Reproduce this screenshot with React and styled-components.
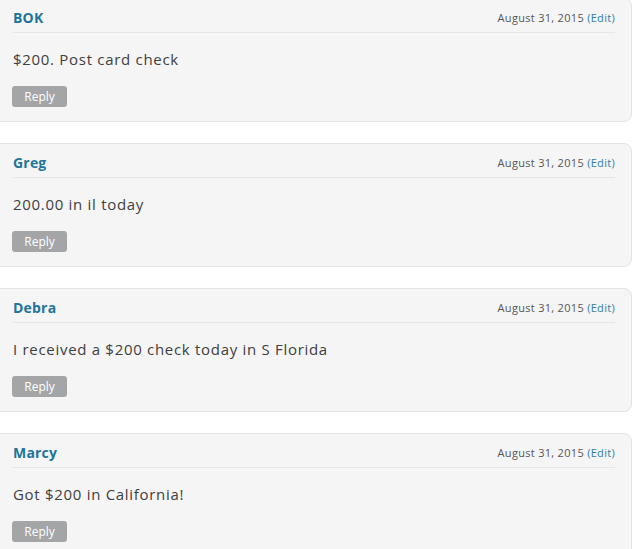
import React from "react";
import styled, { createGlobalStyle } from "styled-components";

const comments = [
  { id: 1, author: "BOK", date: "August 31, 2015", text: "$200. Post card check" },
  { id: 2, author: "Greg", date: "August 31, 2015", text: "200.00 in il today" },
  { id: 3, author: "Debra", date: "August 31, 2015", text: "I received a $200 check today in S Florida" },
  { id: 4, author: "Marcy", date: "August 31, 2015", text: "Got $200 in California!" },
];

export default function App() {
  return (
    <>
      <GlobalStyle />
      <CommentList>
        {comments.map((c) => (
          <Card key={c.id}>
            <Header>
              <Author>{c.author}</Author>
              <Meta>
                {c.date} <EditLink href="#">(Edit)</EditLink>
              </Meta>
            </Header>
            <Body>{c.text}</Body>
            <ReplyButton>Reply</ReplyButton>
          </Card>
        ))}
      </CommentList>
    </>
  );
}

const GlobalStyle = createGlobalStyle`
  body {
    margin: 0;
    background: #ffffff;
    font-family: "Open Sans", "Lato", sans-serif;
    overflow: hidden;
  }
`;

const CommentList = styled.div`
  display: flex;
  flex-direction: column;
  gap: 21px;
  margin: -2px 3px 0 -10px;
`;

const Card = styled.div`
  background: #f5f5f5;
  border: 1px solid #e3e3e3;
  border-radius: 8px;
  padding: 0 16px 14px 22px;
`;

const Header = styled.div`
  display: flex;
  justify-content: space-between;
  align-items: center;
  padding: 9px 0 4px;
  line-height: 20px;
  border-bottom: 1px solid #e6e6e6;
`;

const Author = styled.span`
  font-size: 14px;
  font-weight: 700;
  letter-spacing: 0.2px;
  color: #21759b;
`;

const Meta = styled.span`
  font-size: 11px;
  letter-spacing: 0.3px;
  color: #555555;
`;

const EditLink = styled.a`
  color: #2e7fa6;
  text-decoration: none;
`;

const Body = styled.p`
  margin: 16px 0 0;
  font-size: 15px;
  line-height: 20px;
  letter-spacing: 0.7px;
  color: #404040;
`;

const ReplyButton = styled.button`
  display: block;
  margin-top: 17px;
  margin-left: -1px;
  width: 55px;
  height: 21px;
  border: none;
  border-radius: 3px;
  background: #a3a5a7;
  color: #ffffff;
  font-family: "Open Sans", sans-serif;
  font-size: 12px;
  padding: 0;
`;
